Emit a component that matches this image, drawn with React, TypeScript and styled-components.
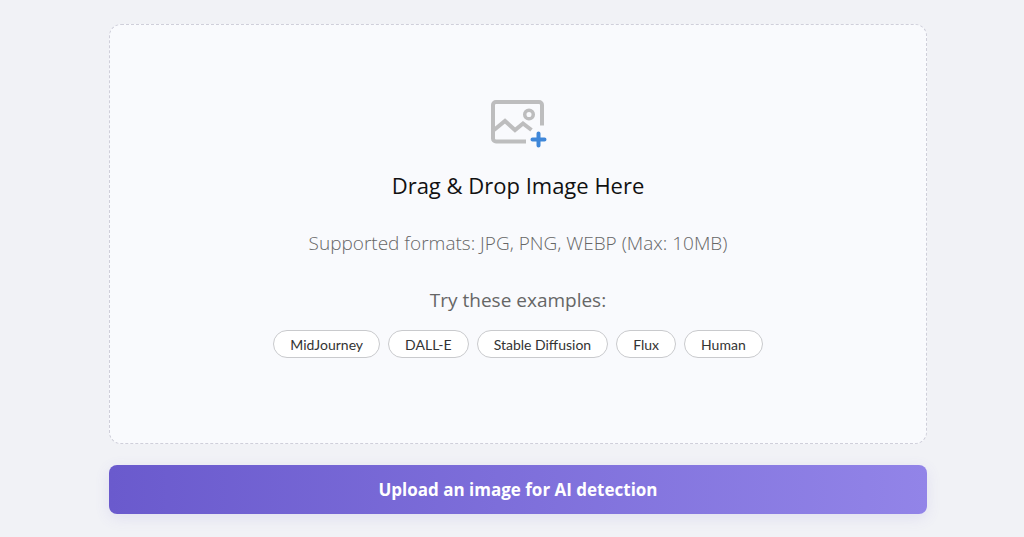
import React from "react";
import styled, { createGlobalStyle } from "styled-components";

const GlobalStyle = createGlobalStyle`
  *, *::before, *::after { box-sizing: border-box; }
  body {
    margin: 0;
    background: #f1f2f6;
    font-family: "Open Sans", "Noto Sans", sans-serif;
  }
`;

const Page = styled.main`
  display: flex;
  flex-direction: column;
  gap: 21px;
  padding: 24px 97px 23px 109px;
`;

const DropZone = styled.section`
  display: flex;
  flex-direction: column;
  align-items: center;
  padding: 74px 24px 85px;
  border: 1px dashed #cfcfda;
  border-radius: 12px;
  background: #f9fafd;
`;

const Title = styled.h1`
  margin: 20px 0 0;
  color: #111;
  font-size: 22px;
  font-weight: 400;
  line-height: 32px;
`;

const Formats = styled.p`
  margin: 28px 0 0;
  color: #666;
  font-size: 19px;
  font-weight: 300;
  line-height: 28px;
`;

const ExamplesTitle = styled.h2`
  margin: 29px 0 0;
  color: #666;
  font-size: 19px;
  font-weight: 400;
  line-height: 28px;
`;

const Examples = styled.div`
  display: flex;
  flex-wrap: wrap;
  justify-content: center;
  gap: 8px;
  margin-top: 16px;
`;

const ExampleButton = styled.button`
  height: 28px;
  padding: 0 16px;
  border: 1px solid #c9cacd;
  border-radius: 14px;
  background: #fff;
  color: #333;
  font-family: Lato, sans-serif;
  font-size: 14px;
  cursor: pointer;
`;

const UploadButton = styled.button`
  height: 49px;
  border: 0;
  border-radius: 8px;
  background: linear-gradient(90deg, #6a5acd, #9284e8);
  box-shadow: 0 4px 15px rgba(106, 90, 205, 0.12);
  color: #fff;
  font-family: "Open Sans", "Noto Sans", sans-serif;
  font-size: 17px;
  font-weight: 700;
  cursor: pointer;
`;

const AddImageIcon = () => (
  <svg width="58" height="50" viewBox="0 0 58 50" fill="none" aria-hidden="true">
    <g stroke="#bdbdbe" strokeWidth="4">
      <path d="M37 42.500H7a3 3 0 0 1-3-3V6a3 3 0 0 1 3-3h43a3 3 0 0 1 3 3v20.500" />
      <path d="M5 31L16 22 26 31 34 24.500 42.500 31" />
      <circle cx="40" cy="15.500" r="4.300" strokeWidth="3.500" />
    </g>
    <path d="M49.500 34.500v12M43.500 40.500h12" stroke="#3f87d9" strokeWidth="4" strokeLinecap="round" />
  </svg>
);

const examples = ["MidJourney", "DALL-E", "Stable Diffusion", "Flux", "Human"];

export default function App() {
  return (
    <>
      <GlobalStyle />
      <Page>
        <DropZone>
          <AddImageIcon />
          <Title>Drag &amp; Drop Image Here</Title>
          <Formats>Supported formats: JPG, PNG, WEBP (Max: 10MB)</Formats>
          <ExamplesTitle>Try these examples:</ExamplesTitle>
          <Examples>
            {examples.map((name) => (
              <ExampleButton key={name} type="button">{name}</ExampleButton>
            ))}
          </Examples>
        </DropZone>
        <UploadButton type="button">Upload an image for AI detection</UploadButton>
      </Page>
    </>
  );
}
